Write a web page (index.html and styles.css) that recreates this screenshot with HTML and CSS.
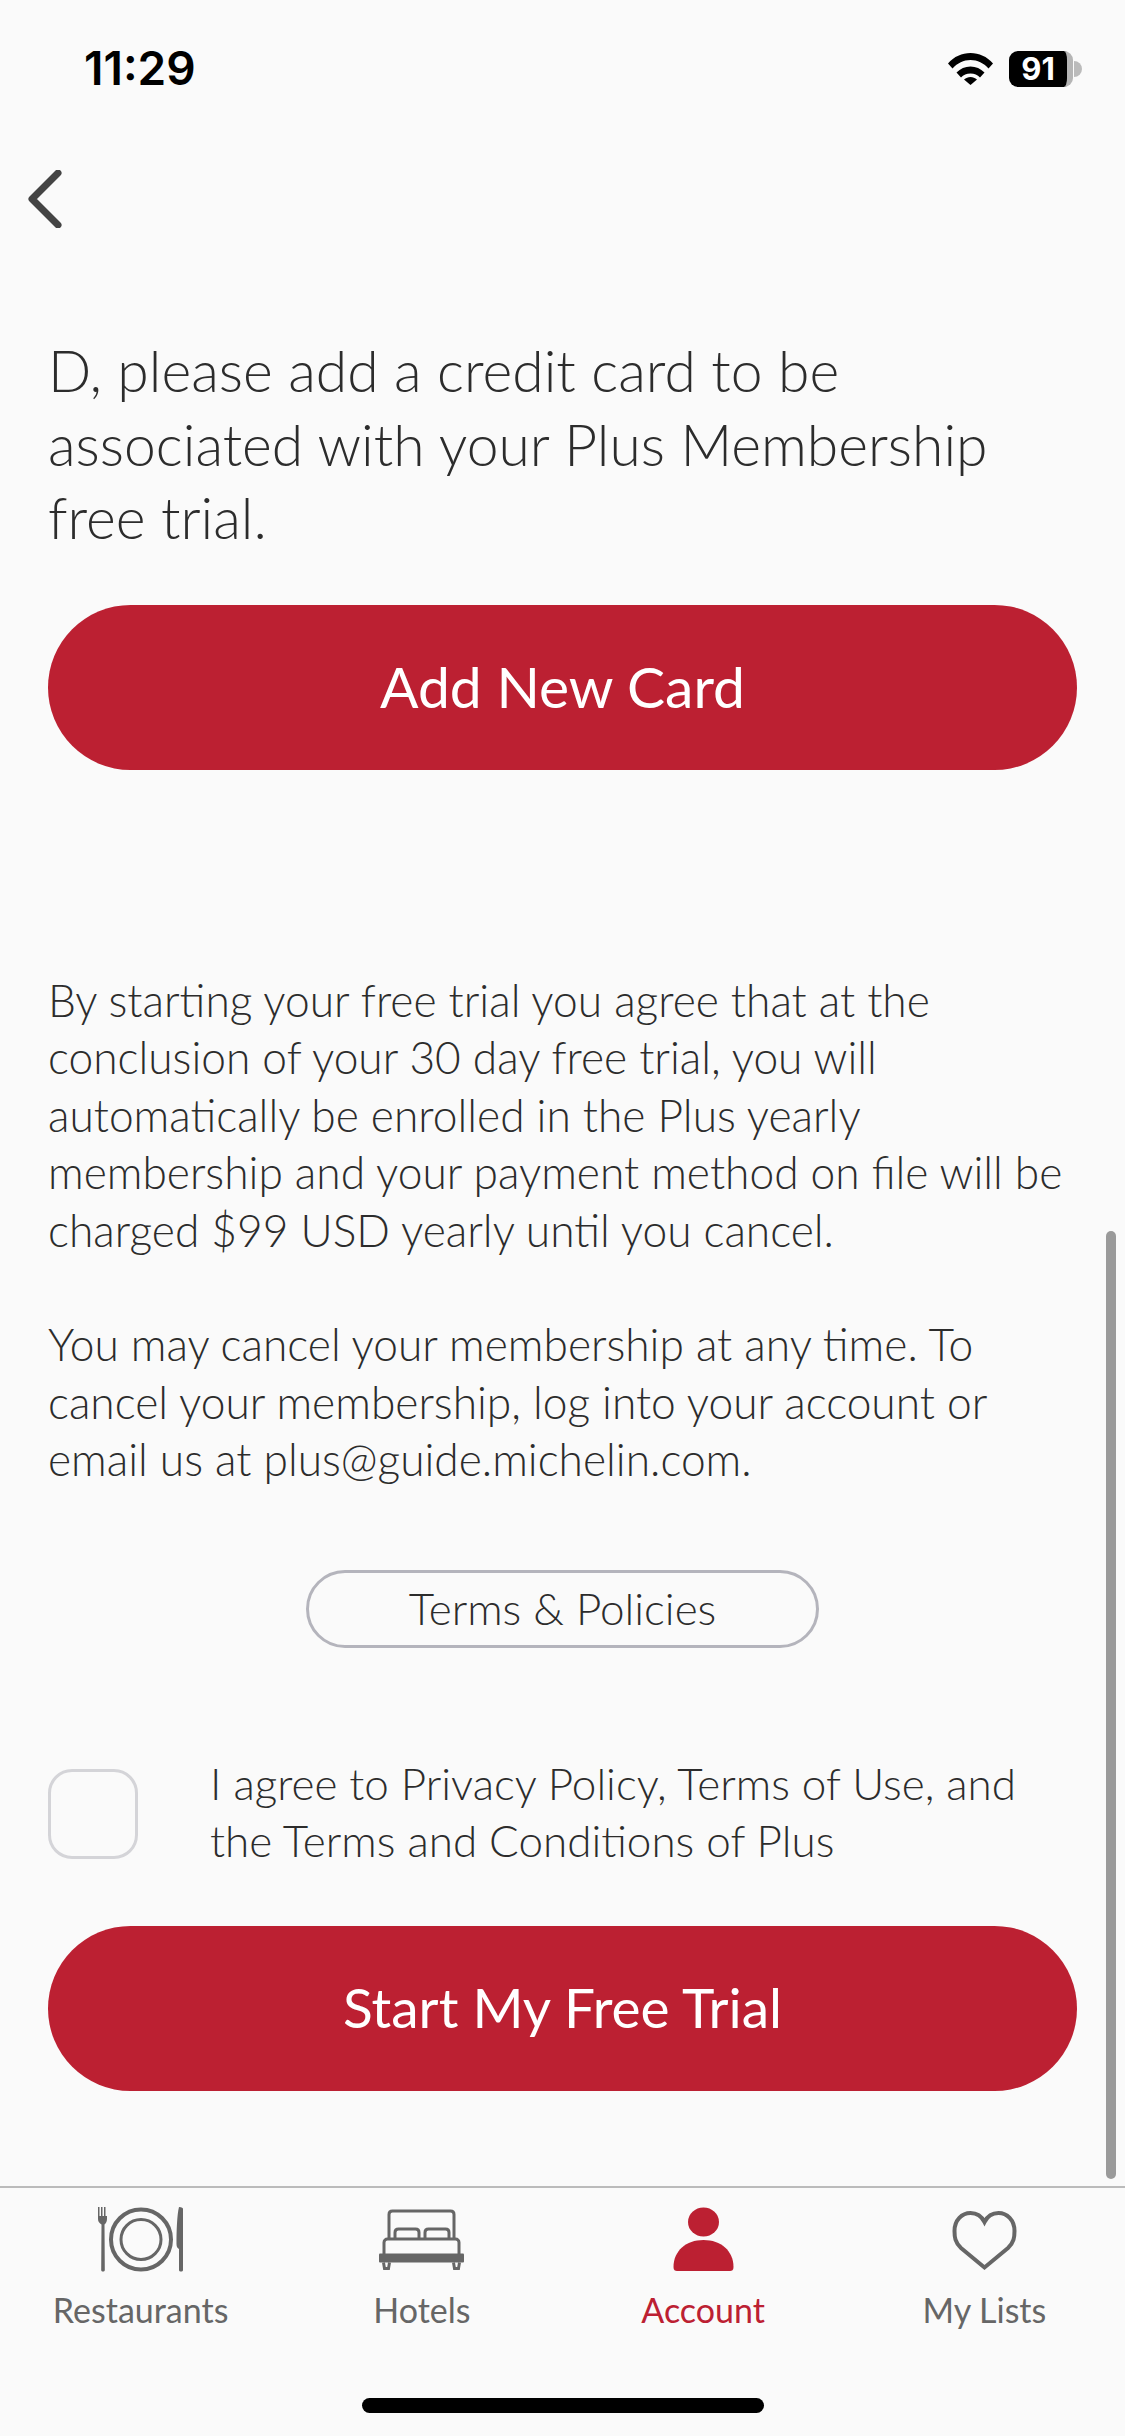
FILE: index.html
```html
<!DOCTYPE html>
<html lang="en">
<head>
    <meta charset="UTF-8">
    <title>Plus Membership</title>
    <link rel="stylesheet" href="styles.css">
</head>
<body>
<div class="screen">

    <div class="status">
        <span class="time">11:29</span>
        <div class="status_right">
            <svg class="wifi" viewBox="0 0 45 33">
                <path d="M0 11.500C6 4.500 14 1 22.500 1S39 4.500 45 11.500L40.500 16.500C35.500 11 29.500 8 22.500 8S9.500 11 4.500 16.500Z"/>
                <path d="M8.500 20.500C12.500 16.500 17 14.500 22.500 14.500S32.500 16.500 36.500 20.500L32 25.500C29.500 23 26.500 21.500 22.500 21.500S15.500 23 13 25.500Z"/>
                <path d="M16 27.500C18 26 20 25 22.500 25S27 26 29 27.500L22.500 33Z"/>
            </svg>
            <div class="battery">
                <div class="battery_body"><span>91</span></div>
                <div class="battery_nub"></div>
            </div>
        </div>
    </div>

    <div class="nav">
        <svg class="back" viewBox="0 0 34 58">
            <path d="M30 3L4 29L30 55"/>
        </svg>
    </div>

    <div class="content">
        <h1>D, please add a credit card to be<br>associated with your Plus Membership<br>free trial.</h1>
        <a class="btn">Add New Card</a>

        <p class="legal">By starting your free trial you agree that at the<br>conclusion of your 30 day free trial, you will<br>automatically be enrolled in the Plus yearly<br>membership and your payment method on file will be<br>charged $99 USD yearly until you cancel.</p>
        <p class="legal legal_2">You may cancel your membership at any time. To<br>cancel your membership, log into your account or<br>email us at plus@guide.michelin.com.</p>

        <a class="terms">Terms &amp; Policies</a>

        <div class="agree">
            <div class="check"></div>
            <p>I agree to Privacy Policy, Terms of Use, and<br>the Terms and Conditions of Plus</p>
        </div>

        <a class="btn btn_trial">Start My Free Trial</a>
    </div>

    <div class="scrollbar"></div>

    <ul class="tabs">
        <li>
            <svg class="icon" width="85" height="65" viewBox="0 0 85 65">
                <g class="line">
                    <circle cx="43" cy="32.500" r="30" stroke-width="4"/>
                    <circle cx="43" cy="32.500" r="20" stroke-width="3"/>
                </g>
                <path class="solid" d="M0 0h1.500v9h1.500V0h1.500v9h1.500V0h1.500v9h1.500V0H9v12c0 3-1.500 4.500-2.500 5.500L6.800 63c0 2-3.600 2-3.600 0L3.500 17.500C1.500 16 0 15 0 12Z"/>
                <path class="solid" d="M81 0c3 0 4 1 4 2V63c0 2-4 2-4 0V42c-2-1-2.500-3-2.500-5C78.500 24 79 8 81 0Z"/>
            </svg>
            <span>Restaurants</span>
        </li>
        <li>
            <svg class="icon" width="85" height="65" viewBox="0 0 85 60">
                <g class="line" stroke-width="3">
                    <path d="M10 29V5c0-2 1-3.500 3.500-3.500h58C74 1.500 75 3 75 5V29"/>
                    <path d="M16 29v-6c0-2.500 1.500-3.500 3.500-3.500h17c2 0 3.500 1 3.500 3.500v6"/>
                    <path d="M46 29v-6c0-2.500 1.500-3.500 3.500-3.500h17c2 0 3.500 1 3.500 3.500v6"/>
                    <path d="M5 45V33c0-2 1.500-3.500 3.500-3.500h68c2 0 3.500 1.500 3.500 3.500v12"/>
                    <path d="M4.500 53l1 6h4l1-6M74.500 53l1 6h4l1-6"/>
                </g>
                <rect class="solid" x="0" y="44" width="85" height="9" rx="1"/>
            </svg>
            <span>Hotels</span>
        </li>
        <li class="active">
            <svg class="icon" width="85" height="65" viewBox="0 0 85 65">
                <ellipse class="solid" cx="42.500" cy="15" rx="15.500" ry="14.500"/>
                <path class="solid" d="M12.500 60C12.500 44 25 33 42.500 33S72.500 44 72.500 60C72.500 63 71 64 69 64H16C14 64 12.500 63 12.500 60Z"/>
            </svg>
            <span>Account</span>
        </li>
        <li>
            <svg class="icon" width="85" height="65" viewBox="0 0 85 65">
                <path class="line" stroke-width="4" d="M42.500 60.500L19 41C13 35.500 12.500 30 12.500 24C12.500 13 20 6 28.500 6C34.500 6 39.500 9 42.500 15C45.500 9 50.500 6 56.500 6C65 6 72.500 13 72.500 24C72.500 30 72 35.500 66 41Z"/>
            </svg>
            <span>My Lists</span>
        </li>
    </ul>

    <div class="home_bar"><div></div></div>

</div>
</body>
</html>
```

FILE: styles.css
```css
*{
    box-sizing: border-box;
}
html,body{
    margin:0;
    padding:0;
    background:#fafafa;
}
.screen{
    position:relative;
    width:1125px;
    height:2436px;
    overflow:hidden;
    display:flex;
    flex-direction:column;
    font-family:"Lato","Noto Sans",sans-serif;
    font-weight:300;
    color:#2c2c2c;
}

/* status bar */
.status{
    height:136px;
    padding:44px 43px 0 84px;
    display:flex;
    justify-content:space-between;
    align-items:flex-start;
}
.time{
    font-family:"Inter",sans-serif;
    font-weight:600;
    font-size:46px;
    line-height:48px;
    color:#000;
}
.status_right{
    display:flex;
    gap:16px;
    padding-top:7px;
}
.wifi{
    width:45px;
    height:33px;
    margin-top:1px;
}
.battery{
    display:flex;
    align-items:center;
}
.battery_body{
    width:64px;
    height:36px;
    background:#000;
    border-right:6px solid #b5b5b5;
    border-radius:9px;
    color:#fff;
    font-family:"Inter",sans-serif;
    font-weight:700;
    font-size:31px;
    line-height:36px;
    text-align:center;
}
.battery_nub{
    width:8px;
    height:16px;
    margin-left:1px;
    background:#bbb;
    border-radius:0 8px 8px 0;
}

/* back arrow */
.nav{
    height:198px;
    padding:34px 0 0 28px;
}
.back{
    display:block;
    width:34px;
    height:58px;
    fill:none;
    stroke:#444;
    stroke-width:7;
    stroke-linecap:round;
    stroke-linejoin:round;
}

.content{
    flex:1;
    padding:0 48px;
}
h1{
    margin:0;
    font-size:57px;
    line-height:73.500px;
    font-weight:300;
}
.btn{
    display:block;
    height:165px;
    margin-top:50px;
    border-radius:83px;
    background:#bc2032;
    color:#fff;
    font-size:57px;
    font-weight:400;
    line-height:162px;
    text-align:center;
}
.legal{
    margin:0;
    padding-top:201px;
    font-size:44.300px;
    line-height:57.500px;
    white-space:nowrap;
}
.legal_2{
    padding-top:57px;
}
.terms{
    display:block;
    width:513px;
    height:78px;
    margin:82px 0 0 258px;
    border:3px solid #b4b4bc;
    border-radius:39px;
    font-size:44px;
    line-height:70px;
    text-align:center;
}
.agree{
    display:flex;
    gap:72px;
    margin-top:107px;
}
.check{
    flex:none;
    width:90px;
    height:90px;
    margin-top:14px;
    border:3px solid #d4d4d8;
    border-radius:24px;
}
.agree p{
    margin:0;
    font-size:44px;
    line-height:57.500px;
}
.btn_trial{
    margin-top:56px;
    font-size:55px;
}

/* overlay scroll indicator */
.scrollbar{
    position:absolute;
    left:1106px;
    top:1231px;
    width:10px;
    height:948px;
    border-radius:5px;
    background:#9a9a9a;
}

/* bottom tabs */
.tabs{
    display:grid;
    grid-template-columns:repeat(4,1fr);
    margin:0;
    padding:19px 0 0;
    height:151px;
    list-style:none;
    border-top:2px solid #bbb;
}
.tabs li{
    display:flex;
    flex-direction:column;
    align-items:center;
    font-size:34px;
    font-weight:400;
    color:#666;
}
.tabs span{
    line-height:40px;
    margin-top:18px;
}
.icon{
    display:block;
}
.solid{
    fill:#666;
}
.line{
    fill:none;
    stroke:#666;
}
.tabs .active{
    color:#bc2032;
}
.active .solid{
    fill:#bc2032;
}
.home_bar{
    height:99px;
    padding-top:61px;
}
.home_bar div{
    width:402px;
    height:15px;
    margin:0 auto;
    border-radius:8px;
    background:#000;
}
```
